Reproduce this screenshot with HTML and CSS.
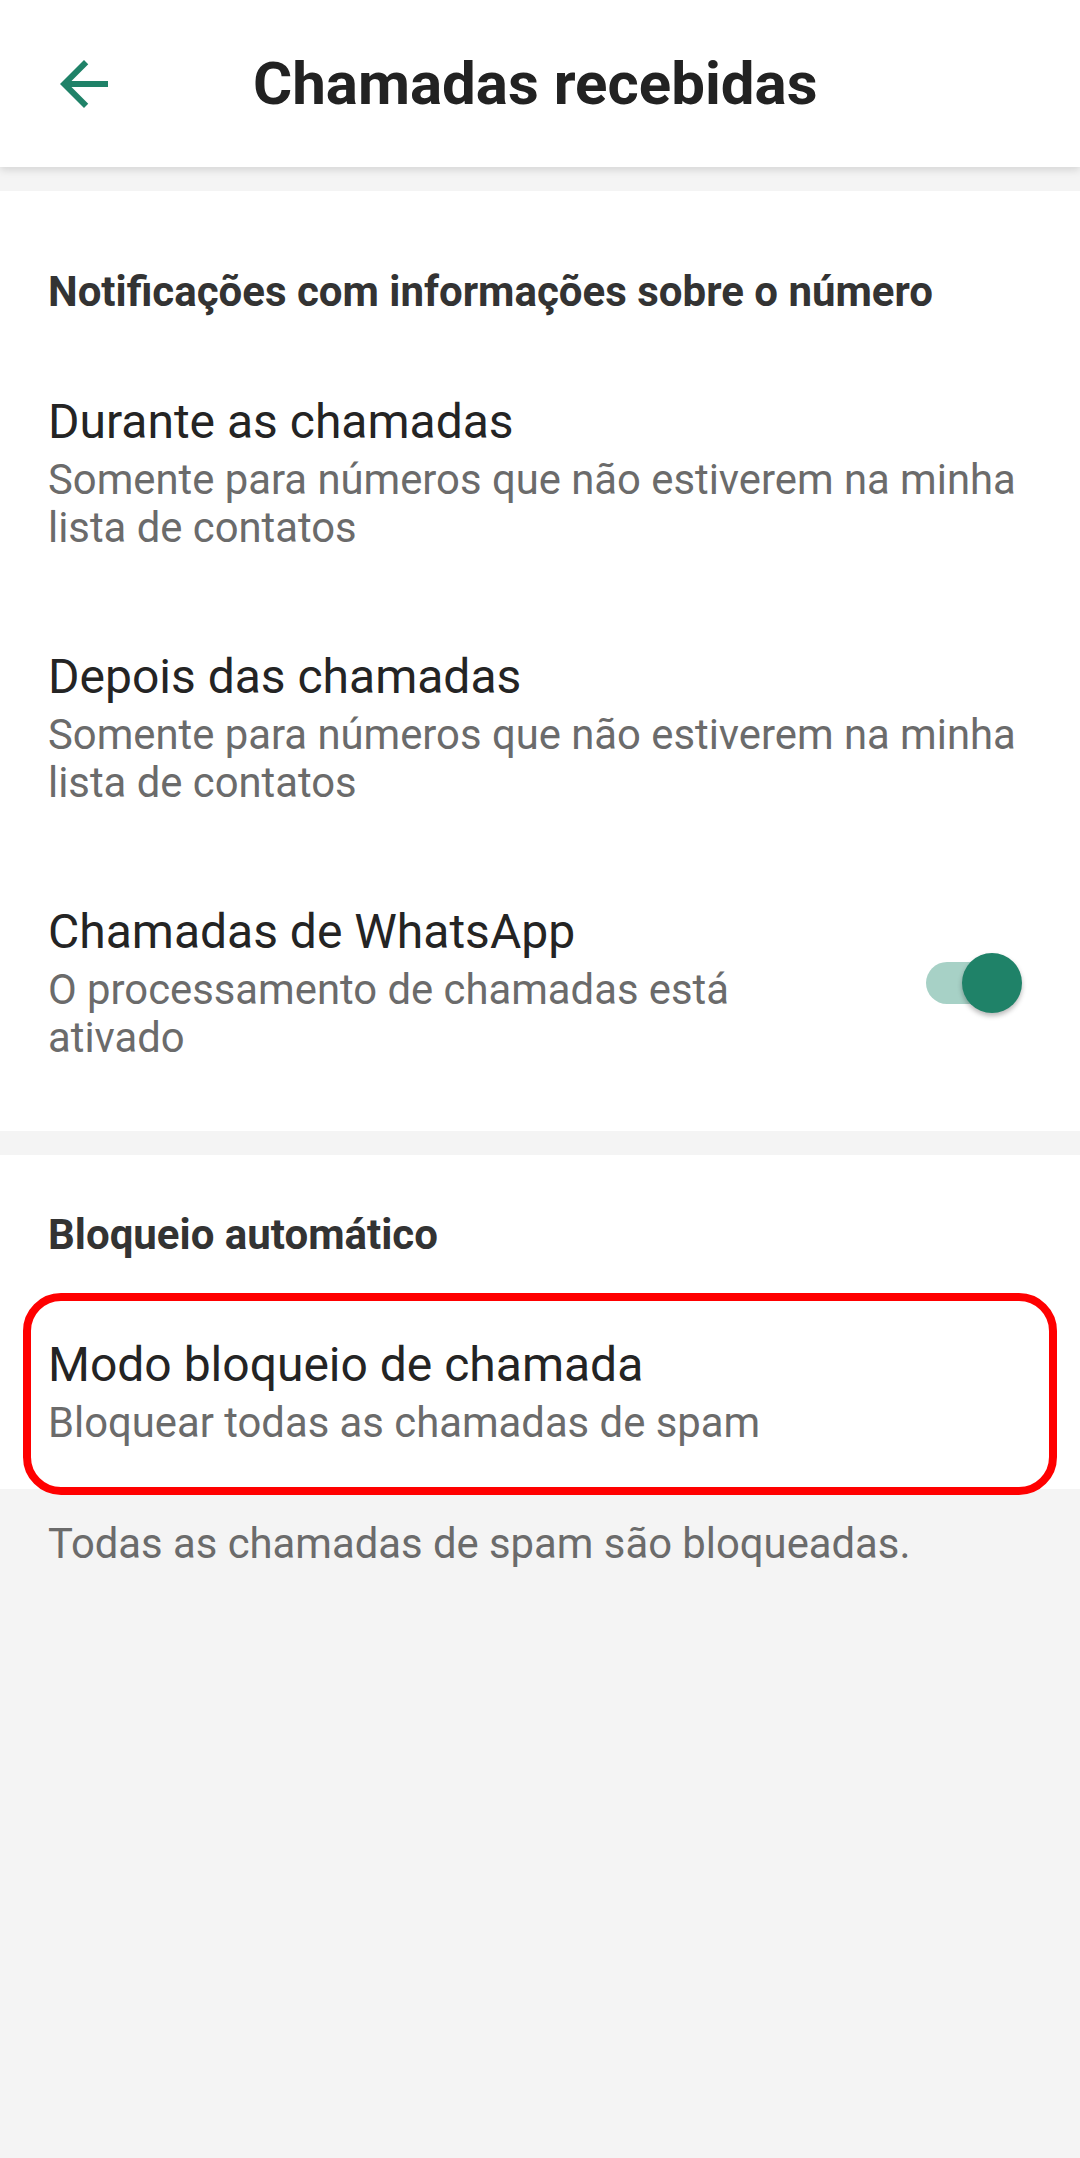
FILE: index.html
```html
<!DOCTYPE html>
<html lang="pt">
<head>
    <meta charset="UTF-8">
    <meta name="viewport" content="width=device-width, initial-scale=1.0">
    <title>Chamadas recebidas</title>
    <link rel="stylesheet" href="styles.css">
</head>
<body>
    <header class="top-bar">
        <svg class="back-icon" viewBox="0 0 24 24" width="72" height="72">
            <path d="M20 11H7.83l5.59-5.59L12 4l-8 8 8 8 1.41-1.41L7.83 13H20v-2z"/>
        </svg>
        <h1 class="top-title">Chamadas recebidas</h1>
    </header>

    <!-- Notificações -->
    <section class="group group-first">
        <h2 class="group-title">Notificações com informações sobre o número</h2>
        <div class="pref">
            <div class="pref-text">
                <div class="pref-title">Durante as chamadas</div>
                <div class="pref-summary">Somente para números que não estiverem na minha lista de contatos</div>
            </div>
        </div>
        <div class="pref">
            <div class="pref-text">
                <div class="pref-title">Depois das chamadas</div>
                <div class="pref-summary">Somente para números que não estiverem na minha lista de contatos</div>
            </div>
        </div>
        <div class="pref pref-switch">
            <div class="pref-text">
                <div class="pref-title">Chamadas de WhatsApp</div>
                <div class="pref-summary">O processamento de chamadas está ativado</div>
            </div>
            <div class="switch">
                <span class="switch-track"></span>
                <span class="switch-thumb"></span>
            </div>
        </div>
    </section>

    <!-- Bloqueio -->
    <section class="group group-second">
        <h2 class="group-title">Bloqueio automático</h2>
        <div class="pref pref-marked">
            <div class="pref-text">
                <div class="pref-title">Modo bloqueio de chamada</div>
                <div class="pref-summary">Bloquear todas as chamadas de spam</div>
            </div>
        </div>
    </section>

    <p class="footnote">Todas as chamadas de spam são bloqueadas.</p>
</body>
</html>
```

FILE: styles.css
```css
body {
    margin: 0;
    background: #f4f4f4;
    font-family: Roboto, "Liberation Sans", sans-serif;
    color: #242424;
}

.top-bar {
    height: 167px;
    display: flex;
    align-items: center;
    background: #fff;
    box-shadow: 0 3px 8px rgba(0, 0, 0, 0.13);
    position: relative;
    z-index: 1;
}

.back-icon {
    margin-left: 48px;
    fill: #1f8268;
    flex-shrink: 0;
}

.top-title {
    margin: 0 0 0 133px;
    font-size: 60px;
    font-weight: 700;
    color: #222;
    line-height: 72px;
}

.group {
    background: #fff;
    margin-top: 24px;
}

.group-first {
    padding: 77px 0 22px;
}

.group-second {
    padding: 56px 0 0;
}

.group-title {
    margin: 0 0 28px;
    padding: 0 48px;
    font-size: 42px;
    font-weight: 700;
    line-height: 48px;
    color: #333;
}

.pref {
    display: flex;
    align-items: center;
    padding: 50px 48px 47px;
}

.pref-text {
    flex: 1;
}

.pref-title {
    font-size: 48px;
    line-height: 56px;
    color: #242424;
}

.pref-summary {
    margin-top: 6px;
    font-size: 41.8px;
    line-height: 48px;
    color: #6b6b6b;
}

.pref-switch {
    padding-right: 58px;
}

.switch {
    position: relative;
    width: 96px;
    height: 60px;
    margin-left: 60px;
    flex-shrink: 0;
}

.switch-track {
    position: absolute;
    left: 0;
    top: 9px;
    width: 87px;
    height: 42px;
    border-radius: 21px;
    background: #a7d1c6;
}

.switch-thumb {
    position: absolute;
    left: 36px;
    top: 0;
    width: 60px;
    height: 60px;
    border-radius: 50%;
    background: #1f8268;
    box-shadow: 0 3px 5px rgba(0, 0, 0, 0.28);
}

.pref-marked {
    position: relative;
    padding-bottom: 42px;
}

.pref-marked::after {
    content: "";
    position: absolute;
    top: 6px;
    bottom: -6px;
    left: 23px;
    right: 23px;
    border: 8px solid #ff0000;
    border-radius: 38px;
}

.footnote {
    margin: 31px 0 0;
    padding: 0 48px;
    font-size: 41.8px;
    line-height: 48px;
    color: #6b6b6b;
}
```
